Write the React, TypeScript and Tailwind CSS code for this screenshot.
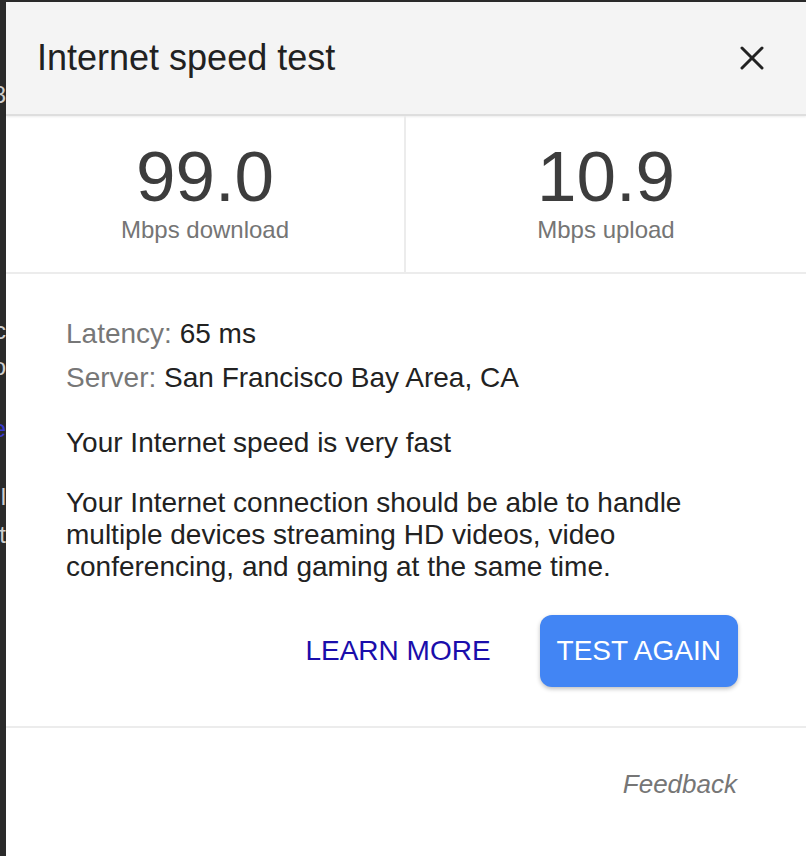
import { X } from "lucide-react"

const stats = [
  { value: "99.0", label: "Mbps download" },
  { value: "10.9", label: "Mbps upload" },
]

// bits of the page behind the dialog, cut off by the left edge
const behind = [
  { text: "8", className: "mt-[80px] text-[#cfcfcf]" },
  { text: "c", className: "mt-[210px] text-[#cfcfcf]" },
  { text: "o", className: "mt-[10px] text-[#cfcfcf]" },
  { text: "e", className: "mt-[36px] text-[#3a3ad0]" },
  { text: "il", className: "mt-[42px] text-[#cfcfcf]" },
  { text: "t", className: "mt-[12px] text-[#cfcfcf]" },
]

const App = () => {
  return (
    <div className="flex flex-col h-[856px] w-[806px] overflow-hidden bg-[#2a2a2a] font-['Liberation_Sans',Arial,sans-serif]">
      <div className="h-[2px] shrink-0" />
      <div className="flex flex-1 min-h-0">
        {/* Page behind */}
        <div className="w-[6px] shrink-0 overflow-hidden flex flex-col items-end text-[24px] leading-[26px]">
          {behind.map((b, i) => (
            <div key={i} className={`whitespace-nowrap ${b.className}`}>
              {b.text}
            </div>
          ))}
        </div>

        {/* Dialog */}
        <div className="flex-1 flex flex-col bg-white">
          {/* Header */}
          <div className="h-[114px] shrink-0 flex items-center justify-between pl-[31px] pr-[34px] bg-[#f4f4f4] border-b-2 border-[#dedede] shadow-[0_1px_2px_rgba(0,0,0,0.08)]">
            <h1 className="text-[36px] leading-none text-[#212121]">Internet speed test</h1>
            <X size={40} strokeWidth={1.8} className="text-[#222]" />
          </div>

          {/* Stats */}
          <div className="grid grid-cols-2 h-[158px] shrink-0 border-b-2 border-[#ececec]">
            {stats.map((s, i) => (
              <div
                key={s.label}
                className={`flex flex-col items-center pt-[22px] ${i === 0 ? "border-r-2 border-[#ececec]" : ""}`}
              >
                <div className="text-[71px] leading-[78px] text-[#3d3d3d]">{s.value}</div>
                <div className="text-[24px] leading-[28px] text-[#757575]">{s.label}</div>
              </div>
            ))}
          </div>

          {/* Body */}
          <div className="flex flex-col pl-[60px] pr-[68px] pt-[44px] text-[28px] leading-[32px] text-[#222]">
            <div>
              <span className="text-[#777]">Latency:</span> 65 ms
            </div>
            <div className="mt-[12px]">
              <span className="text-[#777]">Server:</span> San Francisco Bay Area, CA
            </div>
            <p className="mt-[33px]">Your Internet speed is very fast</p>
            <p className="mt-[28px]">
              Your Internet connection should be able to handle multiple devices streaming HD videos,
              video conferencing, and gaming at the same time.
            </p>

            <div className="flex items-center justify-end mt-[32px] gap-[32px]">
              <button className="text-[28px] leading-none text-[#1a0dab] px-[17px]">LEARN MORE</button>
              <button className="h-[72px] px-[17px] rounded-[12px] bg-[#4285f4] text-white text-[28px] leading-none shadow-[0_2px_4px_rgba(0,0,0,0.25)]">
                TEST AGAIN
              </button>
            </div>
          </div>

          <div className="mt-[39px] border-t-2 border-[#ececec]" />

          <div className="flex justify-end pr-[69px] pt-[40px]">
            <span className="italic text-[26px] leading-[32px] text-[#767676]">Feedback</span>
          </div>
        </div>
      </div>
    </div>
  )
}

export default App
